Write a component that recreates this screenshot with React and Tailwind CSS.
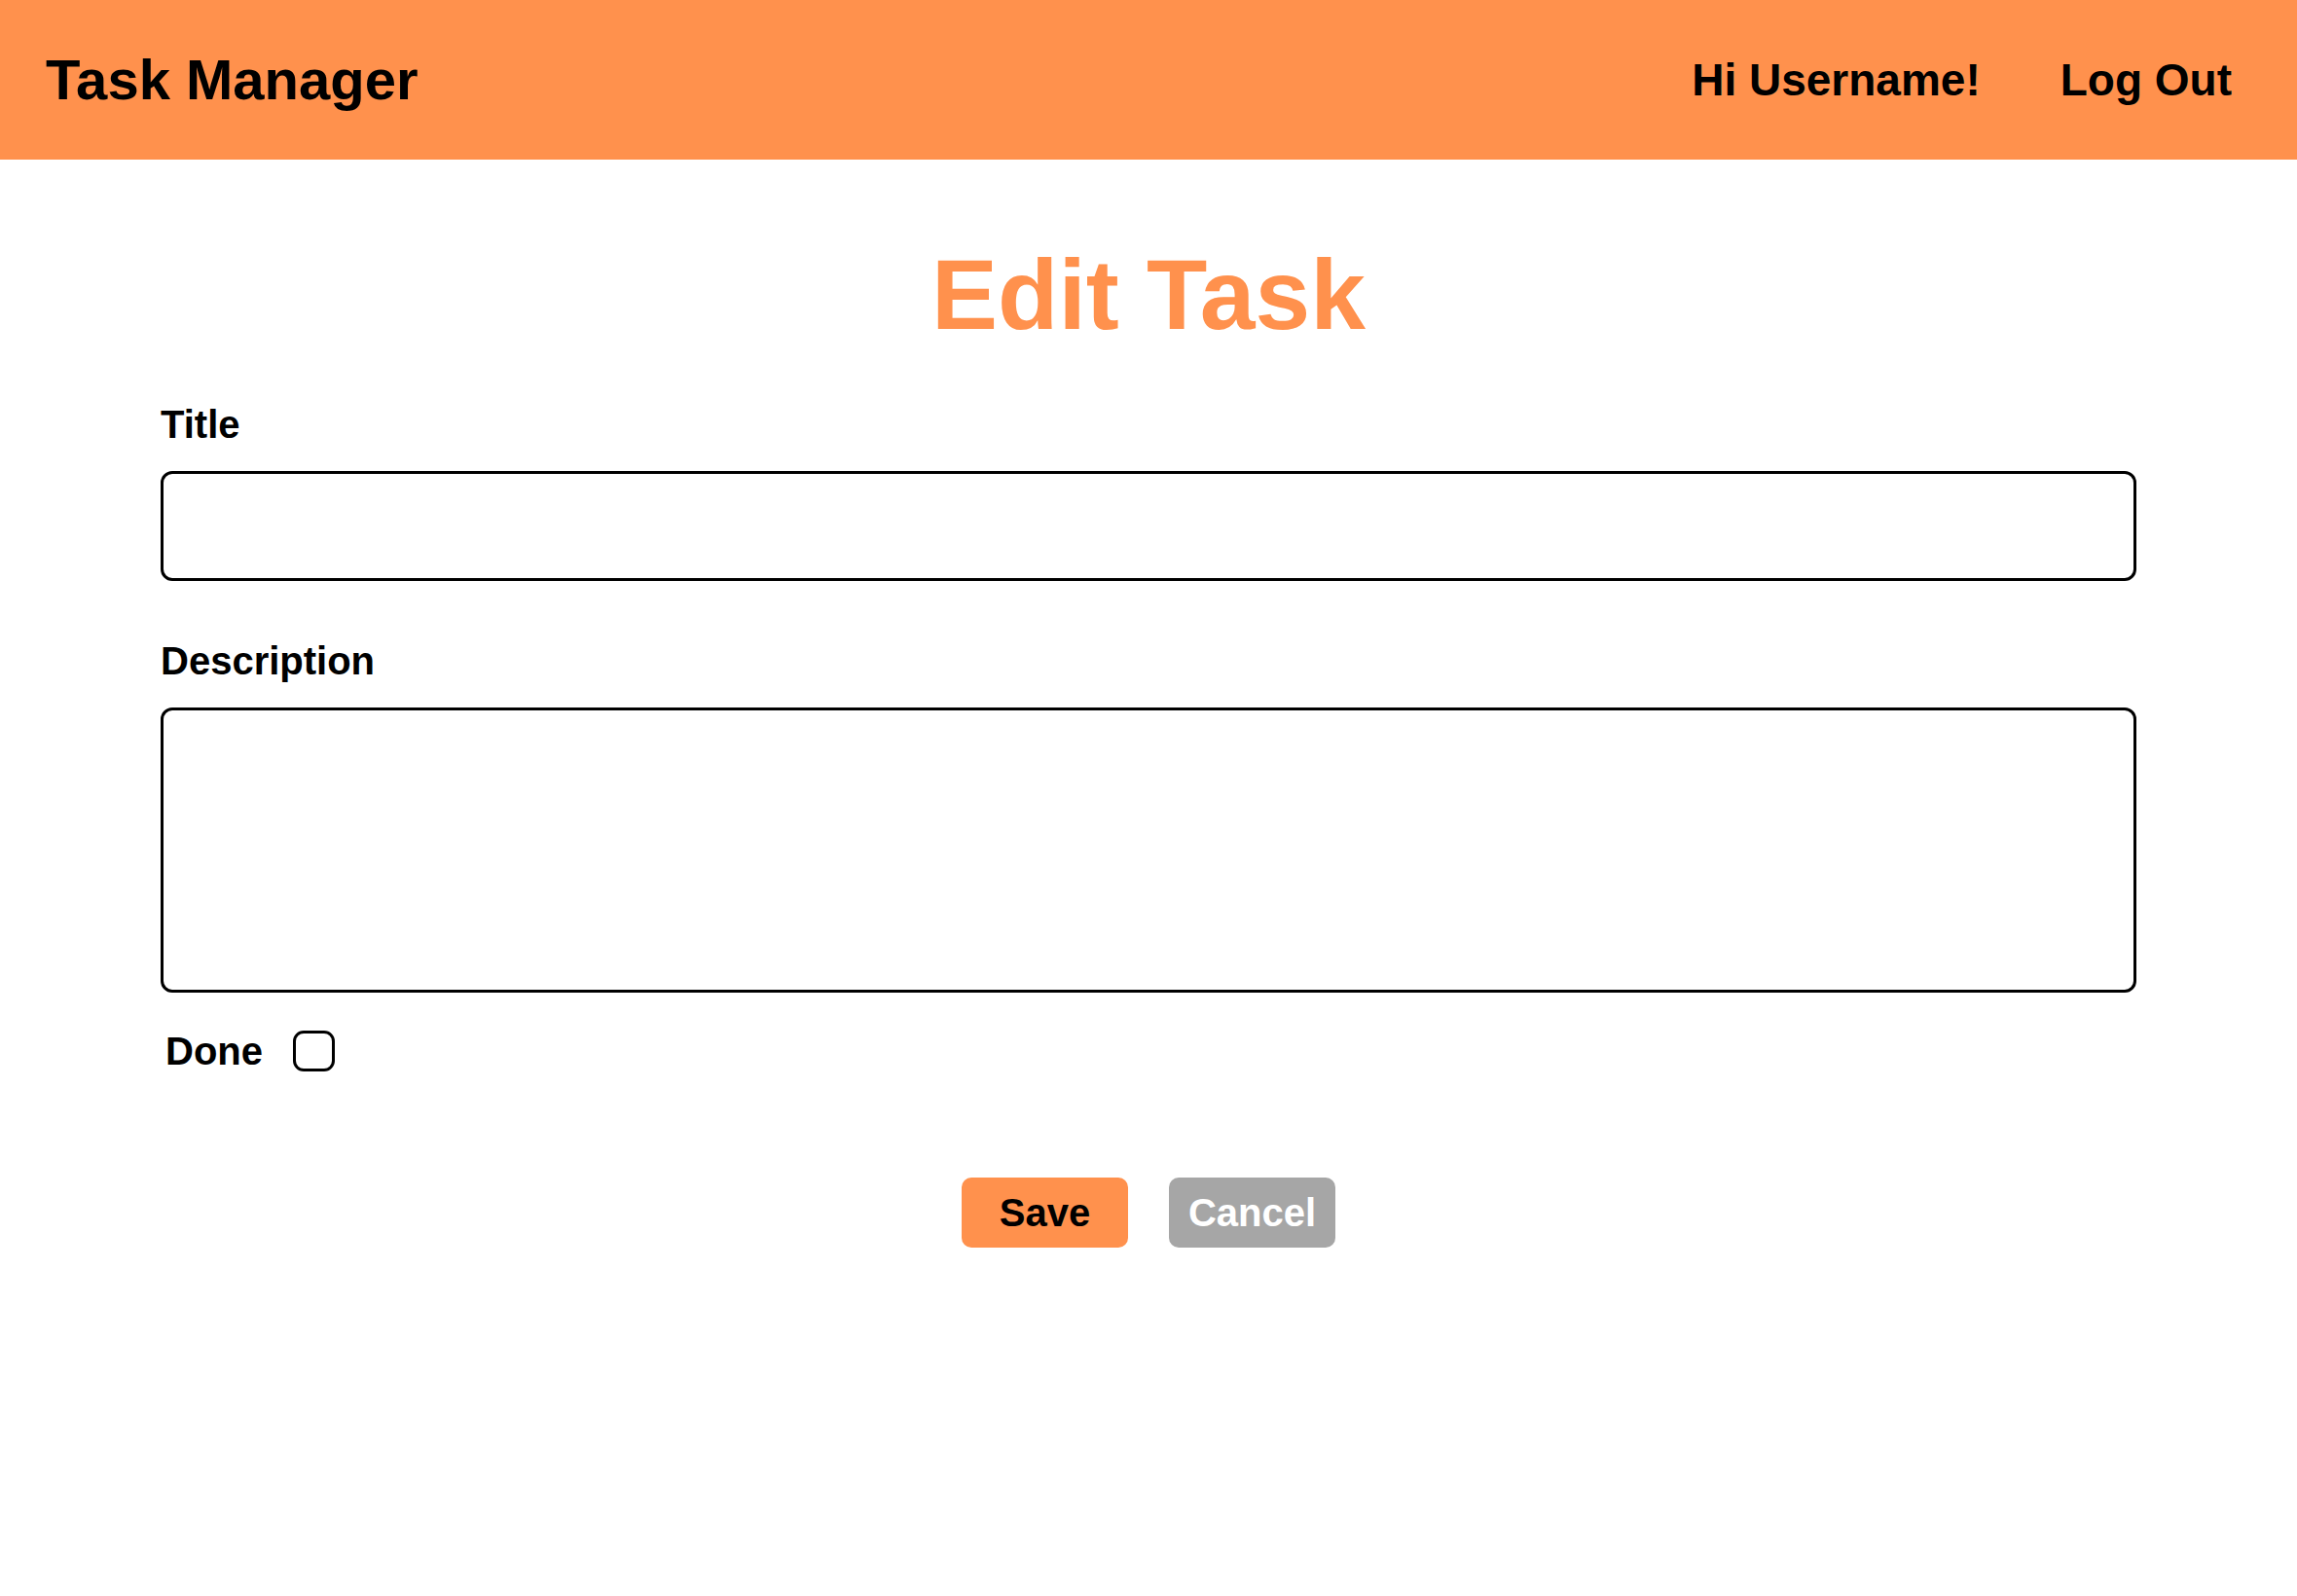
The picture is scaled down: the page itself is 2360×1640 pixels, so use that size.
import React from "react";

export default function App() {
  return (
    <div className="min-h-[1640px] w-full bg-white font-['Liberation_Sans',Arial,sans-serif] text-black">
      <header className="flex h-[164px] items-center justify-between bg-[#FF914D] pl-[47px] pr-[67px]">
        <div className="text-[58px] font-bold leading-none">Task Manager</div>
        <nav className="flex items-center gap-[82px] text-[46px] font-bold leading-none">
          <span>Hi Username!</span>
          <span>Log Out</span>
        </nav>
      </header>

      <main className="px-[165px]">
        <h1 className="mt-[88px] text-center text-[102px] font-bold leading-none text-[#FF914D]">
          Edit Task
        </h1>

        <form className="flex flex-col" onSubmit={(e) => e.preventDefault()}>
          <label className="mt-[62px] text-[40px] font-bold leading-none">Title</label>
          <input
            type="text"
            className="mt-[28px] h-[113px] w-full rounded-[12px] border-[3px] border-black bg-white px-4 text-[38px] outline-none"
          />

          <label className="mt-[62px] text-[40px] font-bold leading-none">Description</label>
          <textarea
            className="mt-[28px] h-[293px] w-full resize-none rounded-[12px] border-[3px] border-black bg-white p-4 text-[38px] outline-none"
          />

          <div className="mt-[39px] ml-[5px] flex h-[42px] items-center gap-[31px]">
            <span className="text-[40px] font-bold leading-none">Done</span>
            <input
              type="checkbox"
              className="h-[42px] w-[43px] appearance-none rounded-[11px] border-[3px] border-black bg-white"
            />
          </div>

          <div className="mt-[109px] flex justify-center gap-[42px]">
            <button
              type="submit"
              className="flex h-[72px] w-[171px] items-center justify-center rounded-[10px] bg-[#FF914D] text-[40px] font-bold leading-none text-black"
            >
              Save
            </button>
            <button
              type="button"
              className="flex h-[72px] w-[171px] items-center justify-center rounded-[10px] bg-[#A6A6A6] text-[40px] font-bold leading-none text-white"
            >
              Cancel
            </button>
          </div>
        </form>
      </main>
    </div>
  );
}
